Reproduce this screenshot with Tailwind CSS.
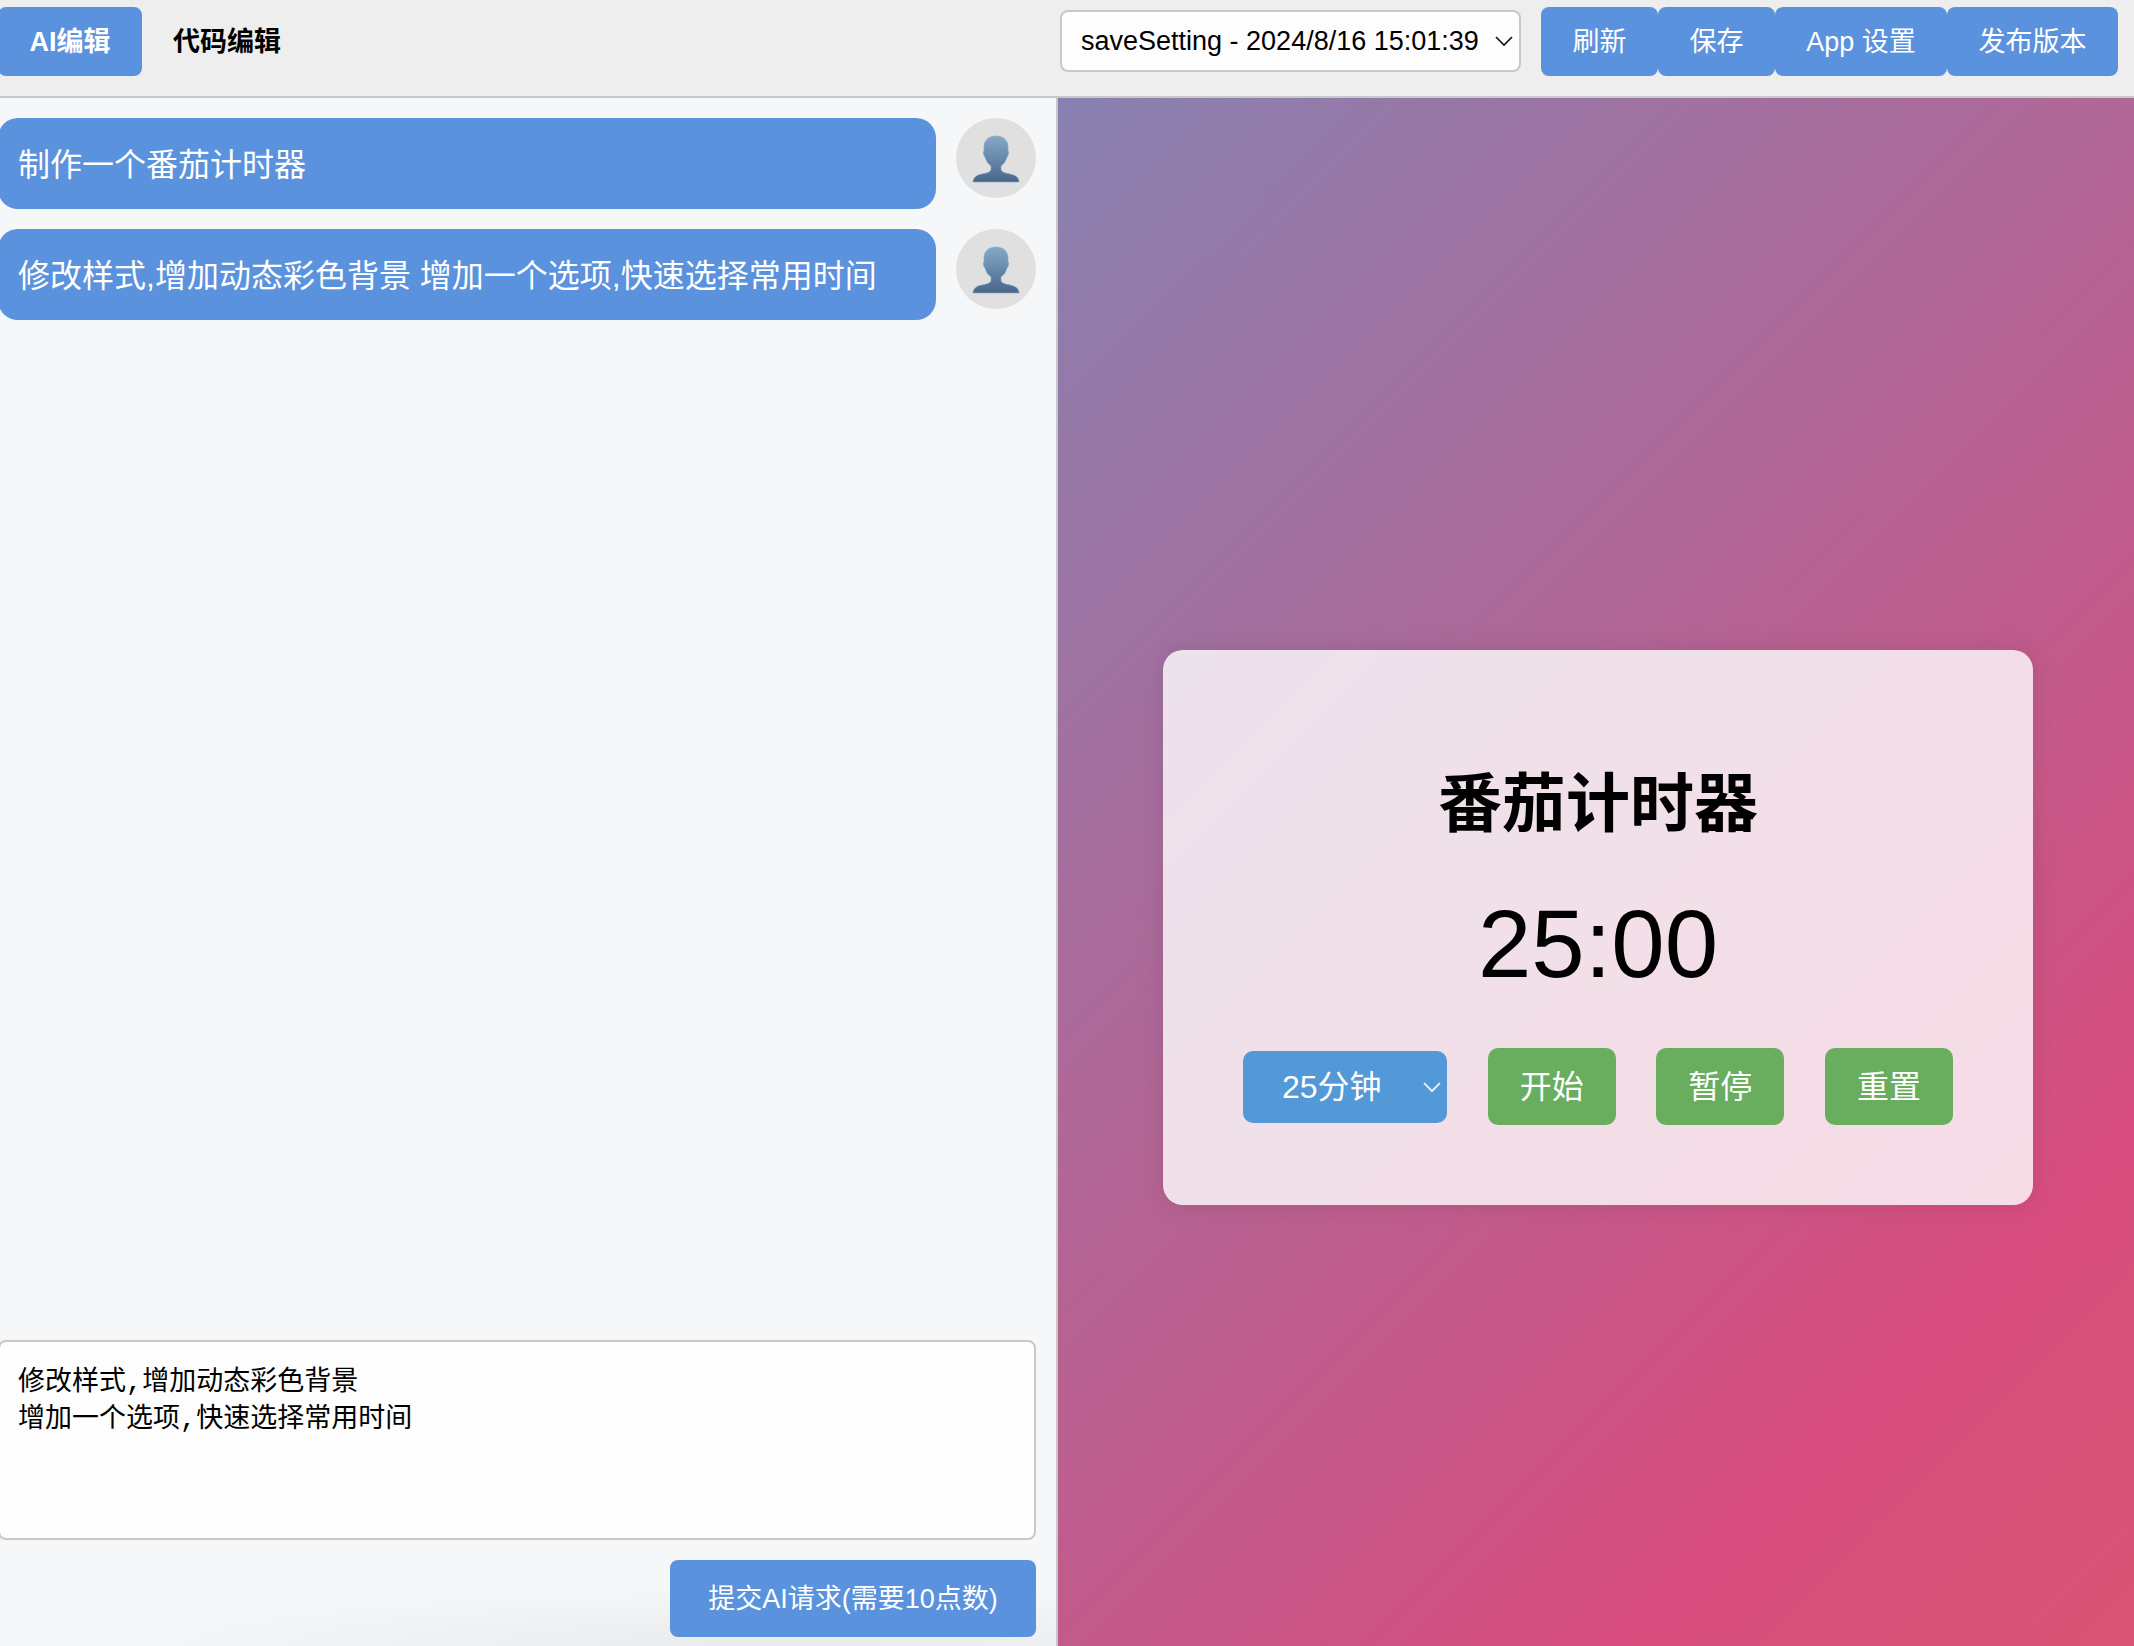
<!DOCTYPE html>
<html lang="zh-CN">
<head>
<meta charset="utf-8">
<meta name="viewport" content="width=device-width, initial-scale=1">
<title>番茄计时器 - AI编辑</title>
<script src="https://cdn.jsdelivr.net/npm/@tailwindcss/browser@4"></script>
</head>
<body class="flex h-screen flex-col overflow-hidden bg-[#f5f7f9] font-['Liberation_Sans','Noto_Sans_CJK_SC',sans-serif] text-[27px] text-black">
  <header class="-ml-0.5 flex items-start justify-between border-b-2 border-[#c8c9cb] bg-[#eeeeee] pt-[7px] pr-4 pb-5">
    <nav class="flex font-bold">
      <button class="h-[69px] w-36 rounded-lg bg-[#5b92dd] pt-0.5 text-white">AI编辑</button>
      <button class="h-[69px] px-[31px] pt-0.5">代码编辑</button>
    </nav>
    <div class="flex">
      <div class="relative mt-[3px] mr-5">
        <select aria-label="版本" class="h-[62px] w-[461px] appearance-none rounded-lg border-2 border-[#c8c8c8] bg-[#fdfdfd] px-[19px]">
          <option>saveSetting - 2024/8/16 15:01:39</option>
        </select>
        <svg class="pointer-events-none absolute top-[26px] right-2 h-[11px] w-[18px]" viewBox="0 0 18 11" fill="none" stroke="#111" stroke-width="1.6"><path d="M1 1l8 8 8-8"/></svg>
      </div>
      <button class="h-[69px] w-[117px] rounded-lg bg-[#5b92dd] pt-0.5 text-white">刷新</button>
      <button class="h-[69px] w-[117px] rounded-lg bg-[#5b92dd] pt-0.5 text-white">保存</button>
      <button class="h-[69px] w-[172px] rounded-lg bg-[#5b92dd] pt-0.5 text-white">App 设置</button>
      <button class="h-[69px] w-[171px] rounded-lg bg-[#5b92dd] pt-0.5 text-white">发布版本</button>
    </div>
  </header>

  <main class="-ml-0.5 flex min-h-0 flex-1">
    <section class="flex w-[1060px] shrink-0 flex-col border-r-2 border-[#c8c8ca] bg-[radial-gradient(700px_60px_at_75%_100%,#e9eaec,#f5f7f9)] pt-5 pr-5 pb-[9px]">
      <div class="flex flex-1 flex-col gap-5 text-[32px]">
        <div class="flex items-start gap-5">
          <p class="flex h-[91px] flex-1 items-center rounded-[20px] bg-[#5b92dd] px-5 pt-0.5 text-white">制作一个番茄计时器</p>
          <div class="flex size-20 items-center justify-center rounded-full bg-[#e0e0e0] pt-0.5">
            <svg class="h-12 w-12" viewBox="0 0 48 48"><use href="#person"/></svg>
          </div>
        </div>
        <div class="flex items-start gap-5">
          <p class="flex h-[91px] flex-1 items-center rounded-[20px] bg-[#5b92dd] px-5 pt-0.5 text-white">修改样式,增加动态彩色背景 增加一个选项,快速选择常用时间</p>
          <div class="flex size-20 items-center justify-center rounded-full bg-[#e0e0e0] pt-0.5">
            <svg class="h-12 w-12" viewBox="0 0 48 48">
              <defs>
                <linearGradient id="skin" x1="0" y1="0" x2="0" y2="1"><stop offset="0" stop-color="#86a9c8"/><stop offset="1" stop-color="#486689"/></linearGradient>
                <path id="person" fill="url(#skin)" stroke="#7fa9c4" stroke-width=".6" d="M24 1C16 1 12 6 12 12v4c-1 0-1 4 1 6 1 4 3 7 6 9v3c0 3-4 4-9 5-6 1-9 4-9 8h46c0-4-3-7-9-8-5-1-9-2-9-5v-3c3-2 5-5 6-9 2-2 2-6 1-6v-4c0-6-4-11-12-11z"/>
              </defs>
              <use href="#person"/>
            </svg>
          </div>
        </div>
      </div>
      <textarea aria-label="AI 请求" class="block h-[200px] w-full resize-none rounded-lg border-2 border-[#c8c8ca] bg-[#fdfdfd] px-[18px] pt-[23px] font-['Liberation_Mono','Noto_Sans_CJK_SC',monospace] leading-[37px]">修改样式,增加动态彩色背景
增加一个选项,快速选择常用时间</textarea>
      <button class="mt-5 h-[77px] w-[366px] self-end rounded-lg bg-[#5b92dd] pt-0.5 text-white">提交AI请求(需要10点数)</button>
    </section>

    <section class="flex flex-1 items-center justify-center bg-linear-135/srgb from-[#8881b0] via-[#d74d7e] via-80% to-[#d85575] pt-[111px] pl-1">
      <div class="flex w-[870px] flex-col items-center rounded-[20px] bg-white/80 p-20 shadow-[0_0_24px_rgba(0,0,0,0.1)]">
        <h1 class="mt-[26px] text-[64px] leading-[96px] font-bold">番茄计时器</h1>
        <div class="mt-[38px] text-[96px] leading-[108px]">25:00</div>
        <div class="mt-[50px] flex w-full items-center justify-between text-[32px] text-white">
          <div class="relative">
            <select aria-label="时长" class="block h-[72px] w-[204px] appearance-none rounded-[10px] bg-[#5398d7] px-[39px]">
              <option>25分钟</option>
            </select>
            <svg class="pointer-events-none absolute top-[31px] right-[6px] h-[11px] w-[18px]" viewBox="0 0 18 11" fill="none" stroke="#fff" stroke-width="1.6"><path d="M1 1l8 8 8-8"/></svg>
          </div>
          <button class="h-[77px] w-32 rounded-[10px] bg-[#69ad5f]">开始</button>
          <button class="h-[77px] w-32 rounded-[10px] bg-[#69ad5f]">暂停</button>
          <button class="h-[77px] w-32 rounded-[10px] bg-[#69ad5f]">重置</button>
        </div>
      </div>
    </section>
  </main>
</body>
</html>
